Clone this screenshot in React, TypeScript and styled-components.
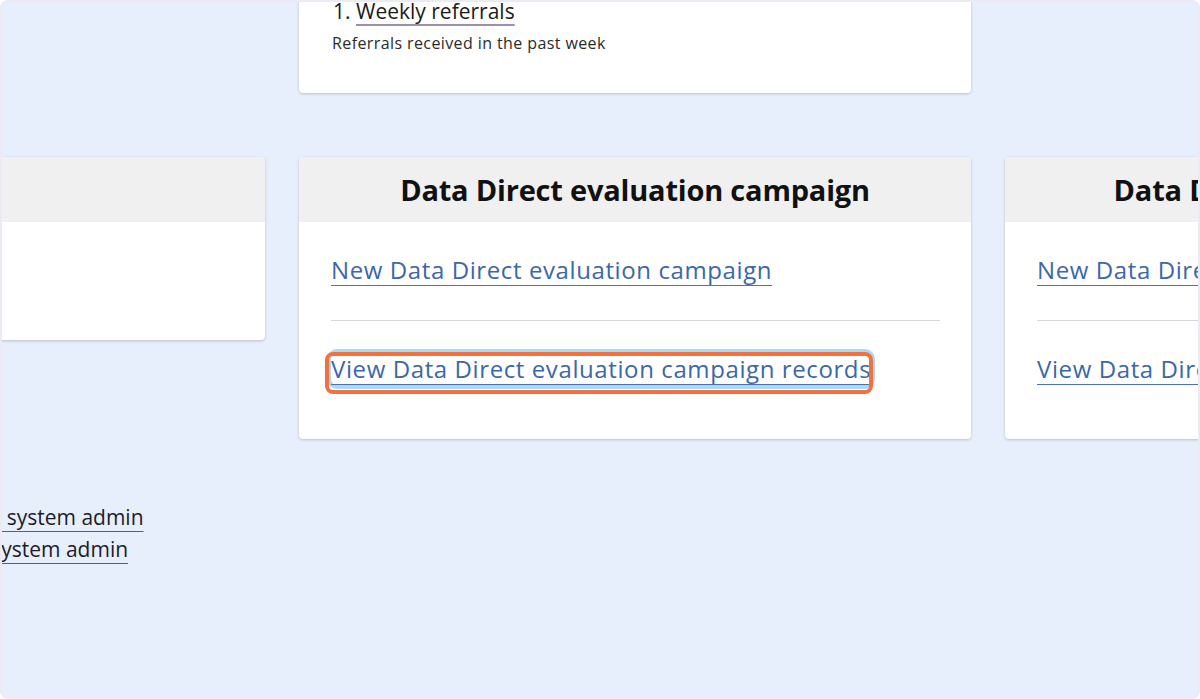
import React from 'react';
import styled, { createGlobalStyle } from 'styled-components';

const GlobalStyle = createGlobalStyle`
  html, body { margin: 0; padding: 0; background: #ffffff; }
  body { font-family: "Open Sans", "Noto Sans", sans-serif; color: #1b1b1b; }
  * { box-sizing: border-box; }
`;

const Frame = styled.div`
  width: 1200px;
  height: 699px;
  border: 2px solid #ecebf4;
  border-radius: 8px;
  overflow: hidden;
  background: #e8effc;
`;

const Canvas = styled.main`
  margin: -90px 0 0 -409px;
  width: 2084px;
  display: flex;
  flex-direction: column;
`;

const Row = styled.div<{ $gap: number }>`
  display: grid;
  grid-template-columns: repeat(3, 672px);
  column-gap: 34px;
  align-items: start;
  margin-bottom: ${(p) => p.$gap}px;
`;

const Card = styled.section<{ $col?: number }>`
  grid-column: ${(p) => p.$col ?? 'auto'};
  background: #ffffff;
  border-radius: 4px;
  box-shadow: 0 1px 3px rgba(0, 0, 0, 0.2);
  overflow: hidden;
`;

const CardHeader = styled.header`
  height: 65px;
  background: #f0f0f0;
  display: flex;
  align-items: center;
  justify-content: center;
`;

const CardTitle = styled.h2`
  margin: 0;
  font-size: 29px;
  font-weight: 700;
  color: #111111;
  letter-spacing: -0.2px;
`;

const CardBody = styled.div`
  padding: 0 31px 20px 32px;
  display: flex;
  flex-direction: column;
`;

const ReportBody = styled.div`
  padding: 20px 32px 40px 33px;
`;

const ReportList = styled.ol`
  margin: 0;
  padding: 0 0 0 24px;
  font-size: 21px;
  line-height: 28px;
  color: #1b1b1b;
`;

const ReportLink = styled.a`
  color: #1b1b1b;
  text-decoration: underline;
  text-decoration-color: #9b8fb2;
  text-decoration-thickness: 2px;
  text-underline-offset: 5px;
`;

const ReportNote = styled.p`
  margin: 8px 0 0 -24px;
  font-size: 16px;
  line-height: 20px;
  letter-spacing: 0.4px;
  color: #2a2a2a;
`;

const LinkItem = styled.div`
  padding: 32px 0 31px;
  line-height: 32px;
`;

const Divider = styled.hr`
  margin: 0;
  border: 0;
  height: 1px;
  background: #d7d7d7;
`;

const ActionLink = styled.a<{ $focused?: boolean }>`
  position: relative;
  display: inline-block;
  font-size: 24px;
  line-height: 32px;
  letter-spacing: 0.6px;
  color: #3b68a8;
  text-decoration: underline;
  text-decoration-color: #4a72ae;
  text-decoration-thickness: 1px;
  text-underline-offset: 6px;
  border-radius: 6px;
  box-shadow: ${(p) => (p.$focused ? '0 0 0 4px #a6dbf7' : 'none')};
`;

const Highlight = styled.span`
  position: absolute;
  left: -6px;
  right: -2px;
  top: -1px;
  bottom: -9px;
  border: 4px solid #f4703f;
  border-radius: 8px;
  pointer-events: none;
`;

const Footer = styled.footer`
  margin-left: 302px;
  display: flex;
  flex-direction: column;
  align-items: flex-start;
`;

const FooterLink = styled.a`
  font-size: 21px;
  line-height: 32px;
  color: #1c1c2b;
  text-decoration: underline;
  text-decoration-color: #6a4f99;
  text-decoration-thickness: 1px;
  text-underline-offset: 6px;
`;

type Section = { title: string; links: { label: string; focused?: boolean }[] };

const sections: Section[] = [
  { title: 'Users', links: [{ label: 'New user' }] },
  {
    title: 'Data Direct evaluation campaign',
    links: [
      { label: 'New Data Direct evaluation campaign' },
      { label: 'View Data Direct evaluation campaign records', focused: true },
    ],
  },
  {
    title: 'Data Direct evaluation requests',
    links: [
      { label: 'New Data Direct evaluation request' },
      { label: 'View Data Direct evaluation request records' },
    ],
  },
];

export default function App() {
  return (
    <>
      <GlobalStyle />
      <Frame>
        <Canvas>
          <Row $gap={64}>
            <Card $col={2}>
              <CardHeader>
                <CardTitle>Reports</CardTitle>
              </CardHeader>
              <ReportBody>
                <ReportList>
                  <li>
                    <ReportLink href="#">Weekly referrals</ReportLink>
                    <ReportNote>Referrals received in the past week</ReportNote>
                  </li>
                </ReportList>
              </ReportBody>
            </Card>
          </Row>
          <Row $gap={62}>
            {sections.map((s) => (
              <Card key={s.title}>
                <CardHeader>
                  <CardTitle>{s.title}</CardTitle>
                </CardHeader>
                <CardBody>
                  {s.links.map((l, i) => (
                    <React.Fragment key={l.label}>
                      {i > 0 && <Divider />}
                      <LinkItem>
                        <ActionLink href="#" $focused={l.focused}>
                          {l.label}
                          {l.focused && <Highlight />}
                        </ActionLink>
                      </LinkItem>
                    </React.Fragment>
                  ))}
                </CardBody>
              </Card>
            ))}
          </Row>
          <Footer>
            <FooterLink href="#">Created by system admin</FooterLink>
            <FooterLink href="#">Edited by system admin</FooterLink>
          </Footer>
        </Canvas>
      </Frame>
    </>
  );
}
